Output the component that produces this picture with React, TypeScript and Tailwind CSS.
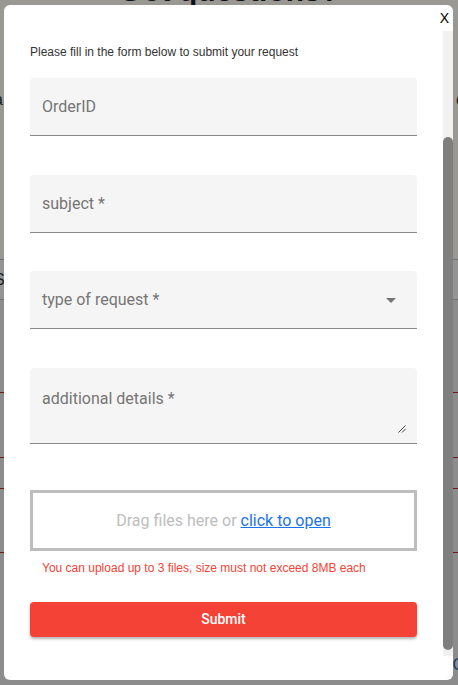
import React from "react";

const roboto = { fontFamily: "Roboto, 'Liberation Sans', Arial, sans-serif" };
const arial = { fontFamily: "'Liberation Sans', Arial, sans-serif" };

function FilledField({ label, tall, select }: { label: string; tall?: boolean; select?: boolean }) {
  return (
    <div
      className={`relative w-full rounded-t-[4px] border-b border-[#8a8a8a] bg-[#f5f5f5] px-[12px] ${
        tall ? "h-[76px] pt-[19px]" : "flex h-[58px] items-center"
      }`}
    >
      <span className="text-[16px] leading-[19px] text-[#757575]" style={roboto}>
        {label}
      </span>
      {select && (
        <svg className="absolute right-[14px] top-[17px] h-[24px] w-[24px]" viewBox="0 0 24 24" fill="#757575">
          <path d="M7 10l5 5 5-5z" />
        </svg>
      )}
      {tall && (
        <svg className="absolute right-[11px] bottom-[10px] h-[9px] w-[9px]" viewBox="0 0 9 9" stroke="#444" strokeWidth="1">
          <path d="M8.5 1.5L1.5 8.5M8.5 5L5 8.5" />
        </svg>
      )}
    </div>
  );
}

export default function App() {
  return (
    <div className="relative h-[685px] w-full overflow-hidden bg-white" style={arial}>
      {/* page behind the dialog */}
      <div className="flex flex-col">
        <div className="h-[259px] bg-[#fffdf6]">
          <h1 className="-mt-[24px] text-center text-[30px] font-bold leading-[30px] text-[#1c1c2a]">Got questions?</h1>
          <div className="mt-[82px] flex justify-between text-[16px] leading-[24px] text-[#333]">
            <span className="-ml-[6px]">a</span>
            <span className="-mr-[6px]">c</span>
          </div>
        </div>
        <div className="flex h-[41px] items-center border-y border-[#bdbdbd] bg-[#f7f7f7] text-[16px] text-[#333]">
          <span className="-ml-[6px]">S</span>
        </div>
        <div className="h-[385px] bg-[#e9e9e9]">
          <div className="mt-[92px] h-px bg-[#c62828]" />
          <div className="mt-[64px] h-px bg-[#c62828]" />
          <div className="mt-[30px] h-px bg-[#c62828]" />
          <div className="mt-[63px] h-px bg-[#c62828]" />
          <div className="mt-[100px] flex justify-end text-[16px] text-[#1565c0]">
            <span className="-mr-[6px]">C</span>
          </div>
        </div>
      </div>

      {/* overlay */}
      <div className="absolute inset-0 bg-black/40" />

      {/* dialog */}
      <div className="absolute left-[4px] top-[5px] h-[675px] w-[449px] rounded-[6px] bg-white pt-[26px]">
        <button className="absolute right-[4px] top-[5px] text-[14px] leading-[16px] font-light text-black">X</button>
        <div className="flex h-[625px]">
          <div className="flex flex-1 flex-col px-[26px] pt-[14px]">
            <p className="text-[12px] leading-[14px] text-[#333]">Please fill in the form below to submit your request</p>
            <div className="mt-[19px]">
              <FilledField label="OrderID" />
            </div>
            <div className="mt-[39px]">
              <FilledField label="subject *" />
            </div>
            <div className="mt-[38px]">
              <FilledField label="type of request *" select />
            </div>
            <div className="mt-[39px]">
              <FilledField label="additional details *" tall />
            </div>
            <div className="mt-[46px] flex h-[61px] items-center justify-center border-[3px] border-[#bdbdbd] text-[16px] text-[#bdbdbd]" style={roboto}>
              <span>
                Drag files here or <a className="text-[#1a73e8] underline">click to open</a>
              </span>
            </div>
            <p className="mt-[10px] px-[12px] text-[12px] leading-[14px] text-[#f44336]">
              You can upload up to 3 files, size must not exceed 8MB each
            </p>
            <button
              className="mt-[27px] h-[35px] w-full rounded-[4px] bg-[#f44336] text-[14px] font-medium text-white shadow-[0_2px_3px_rgba(0,0,0,0.3)]"
              style={roboto}
            >
              Submit
            </button>
          </div>
          <div className="flex w-[10px] flex-col bg-[#f1f1f1]">
            <div className="h-[106px]" />
            <div className="h-[513px] rounded-full bg-[#7f7f7f]" />
          </div>
        </div>
      </div>
    </div>
  );
}
